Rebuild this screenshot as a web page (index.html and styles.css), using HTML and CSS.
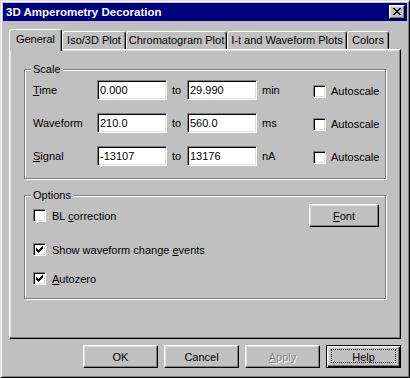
FILE: index.html
```html
<html lang="en">
<head>
    <meta charset="UTF-8">
    <title>3D Amperometry Decoration</title>
    <link rel="stylesheet" href="styles.css">
</head>
<body>
    <div class="dlg">
        <div class="caption">
            <span>3D Amperometry Decoration</span>
            <span class="close">
                <svg width="8" height="7" viewBox="0 0 8 7" shape-rendering="crispEdges"><path d="M0 0h2v1H0zM6 0h2v1H6zM1 1h2v1H1zM5 1h2v1H5zM2 2h4v1H2zM3 3h2v1H3zM2 4h4v1H2zM1 5h2v1H1zM5 5h2v1H5zM0 6h2v1H0zM6 6h2v1H6z"/></svg>
            </span>
        </div>

        <div class="main">
            <div class="tabs">
                <div class="tab active t-general">General</div>
                <div class="tab t-iso">Iso/3D Plot</div>
                <div class="tab t-chrom">Chromatogram Plot</div>
                <div class="tab t-wave">I-t and Waveform Plots</div>
                <div class="tab t-colors">Colors</div>
            </div>

            <div class="sheet">
                <fieldset class="group scale">
                    <legend>Scale</legend>
                    <div class="field-row">
                        <span><u>T</u>ime</span>
                        <input class="edit" type="text" value="0.000">
                        <span class="to">to</span>
                        <input class="edit" type="text" value="29.990">
                        <span class="unit">min</span>
                        <span class="check"><span class="box"></span><span>Autoscale</span></span>
                    </div>
                    <div class="field-row">
                        <span>Waveform</span>
                        <input class="edit" type="text" value="210.0">
                        <span class="to">to</span>
                        <input class="edit" type="text" value="560.0">
                        <span class="unit">ms</span>
                        <span class="check"><span class="box"></span><span>Autoscale</span></span>
                    </div>
                    <div class="field-row">
                        <span><u>S</u>ignal</span>
                        <input class="edit" type="text" value="-13107">
                        <span class="to">to</span>
                        <input class="edit" type="text" value="13176">
                        <span class="unit">nA</span>
                        <span class="check"><span class="box"></span><span>Autoscale</span></span>
                    </div>
                </fieldset>

                <fieldset class="group options">
                    <legend>Options</legend>
                    <div class="opt-top">
                        <span class="check wide"><span class="box"></span><span>BL <u>c</u>orrection</span></span>
                        <button class="btn btn-font"><u>F</u>ont</button>
                    </div>
                    <span class="check wide opt"><span class="box"><svg width="7" height="7" viewBox="0 0 7 7" shape-rendering="crispEdges"><path d="M6 0h1v1H6zM5 1h2v1H5zM0 2h1v1H0zM4 2h3v1H4zM0 3h2v1H0zM3 3h3v1H3zM0 4h5v1H0zM1 5h3v1H1zM2 6h1v1H2z"/></svg></span><span>Show waveform change <u>e</u>vents</span></span>
                    <span class="check wide opt"><span class="box"><svg width="7" height="7" viewBox="0 0 7 7" shape-rendering="crispEdges"><path d="M6 0h1v1H6zM5 1h2v1H5zM0 2h1v1H0zM4 2h3v1H4zM0 3h2v1H0zM3 3h3v1H3zM0 4h5v1H0zM1 5h3v1H1zM2 6h1v1H2z"/></svg></span><span><u>A</u>utozero</span></span>
                </fieldset>
            </div>

            <div class="actions">
                <button class="btn">OK</button>
                <button class="btn">Cancel</button>
                <button class="btn disabled"><u>A</u>pply</button>
                <button class="btn default"><span class="focus">Help</span></button>
            </div>
        </div>
    </div>
</body>
</html>
```

FILE: styles.css
```css
*{box-sizing:border-box;}
body{margin:0;background:#c0c0c0;font:11px "Liberation Sans", Arial, sans-serif;color:#000;}

.dlg{width:410px;height:378px;border:1px solid;border-color:#dfdfdf #000 #000 #dfdfdf;box-shadow:inset 1px 1px #fff, inset -1px -1px #808080;padding:2px;background:#c0c0c0;}

.caption{height:18px;background:#000080;color:#fff;display:flex;align-items:center;justify-content:space-between;padding:0 2px 0 3px;font-weight:bold;font-size:11.5px;}
.close{width:16px;height:14px;background:#c0c0c0;border:1px solid;border-color:#fff #000 #000 #fff;box-shadow:inset -1px -1px #808080, inset 1px 1px #dfdfdf;display:flex;align-items:center;justify-content:center;padding:0 1px 1px 0;}
.close svg{display:block;fill:#000;}

.main{padding:8px 6px 0;}

.tabs{display:flex;align-items:flex-end;height:20px;}
.tab{height:18px;border:1px solid;border-bottom:0;border-color:#fff #000 #000 #fff;border-radius:3px 3px 0 0;box-shadow:inset -1px 0 #808080;text-align:center;line-height:17px;white-space:nowrap;}
.tab.active{height:22px;margin-bottom:-2px;line-height:18px;position:relative;z-index:1;background:#c0c0c0;}
.t-general{width:53px;}
.t-iso{width:64px;}
.t-chrom{width:101px;}
.t-wave{width:120px;}
.t-colors{width:42px;}

.sheet{height:290px;border:1px solid;border-color:#fff #000 #000 #fff;box-shadow:inset -1px -1px #808080, inset 1px 1px #dfdfdf;padding:13px 14px 0;}

.group{margin:0;min-width:0;border:1px solid #808080;box-shadow:inset 1px 1px #fff, 1px 1px #fff;}
.group legend{margin-left:-2px;padding:0 2px;line-height:13px;background:#c0c0c0;}
.scale{padding:4px 0 12px 8px;}
.options{margin-top:10px;padding:2px 6px 13px 8px;display:flex;flex-direction:column;}

.field-row{display:grid;grid-template-columns:64px 70px 20px 70px 56px auto;align-items:center;height:20px;}
.field-row + .field-row{margin-top:13px;}
.to{padding-left:5px;}
.unit{padding-left:5px;}

.edit{width:70px;height:20px;margin:0;padding:0 2px;font:inherit;color:#000;background:#fff;border:1px solid;border-color:#808080 #fff #fff #808080;box-shadow:inset 1px 1px #000, inset -1px -1px #dfdfdf;outline:none;}

.check{display:flex;align-items:center;gap:5px;height:13px;margin-top:2px;white-space:nowrap;}
.check.wide{gap:6px;margin-top:0;}
.box{width:13px;height:13px;flex:none;background:#fff;border:1px solid;border-color:#808080 #fff #fff #808080;box-shadow:inset 1px 1px #000, inset -1px -1px #dfdfdf;display:flex;align-items:center;justify-content:center;}
.box svg{display:block;fill:#000;}

.opt-top{display:flex;justify-content:space-between;align-items:center;height:23px;}
.check.opt{margin-top:16px;}

.btn{width:75px;height:23px;padding:0;margin:0;font:inherit;color:#000;background:#c0c0c0;border:1px solid;border-color:#fff #000 #000 #fff;box-shadow:inset -1px -1px #808080, inset 1px 1px #dfdfdf;}
.btn-font{width:70px;}
.btn.disabled{color:#808080;text-shadow:1px 1px #fff;}
.btn.default{border-color:#000;box-shadow:inset 1px 1px #fff, inset -1px -1px #000, inset -2px -2px #808080, inset 2px 2px #dfdfdf;padding:3px 4px 4px;}
.focus{display:block;height:100%;line-height:14px;border:1px dotted #000;}

.actions{display:flex;justify-content:flex-end;gap:6px;margin-top:6px;}
```
